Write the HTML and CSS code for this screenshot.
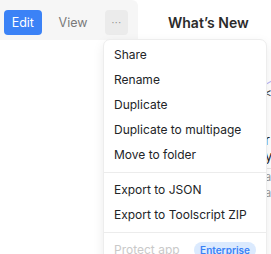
FILE: index.html
```html
<!DOCTYPE html>
<html lang="en">
<head>
  <meta charset="UTF-8">
  <title>App menu</title>
  <link rel="stylesheet" href="styles.css">
</head>
<body>
  <div class="page">
    <div class="topbar">
      <div class="mode-switch">
        <button class="mode-btn active">Edit</button>
        <button class="mode-btn">View</button>
        <button class="more-btn">&middot;&middot;&middot;</button>
      </div>
      <h2 class="whats-new">What’s New</h2>
    </div>

    <div class="behind">
      <div class="behind-line"></div>
      <div class="behind-chevron">&lt;</div>
      <div class="behind-big">r</div>
      <div class="behind-big">y</div>
      <div class="behind-rule"></div>
      <div class="behind-small">a</div>
      <div class="behind-small">a</div>
    </div>

    <div class="menu">
      <div class="menu-group">
        <div class="menu-item">Share</div>
        <div class="menu-item">Rename</div>
        <div class="menu-item">Duplicate</div>
        <div class="menu-item">Duplicate to multipage</div>
        <div class="menu-item">Move to folder</div>
      </div>
      <div class="menu-group">
        <div class="menu-item">Export to JSON</div>
        <div class="menu-item">Export to Toolscript ZIP</div>
      </div>
      <div class="menu-group">
        <div class="menu-item disabled">
          <span>Protect app</span>
          <span class="badge">Enterprise</span>
        </div>
      </div>
    </div>
  </div>
</body>
</html>
```

FILE: styles.css
```css
:root {
  --blue: #3b82f6;
  --text: #222427;
  --muted: #7a7a7a;
  --line: #ececec;
}

body {
  margin: 0;
  font-family: 'Inter', sans-serif;
  color: var(--text);
  background: white;
}

.page {
  position: relative;
  width: 271px;
  height: 254px;
  overflow: hidden;
}

.topbar {
  display: flex;
  align-items: flex-start;
}

.mode-switch {
  display: flex;
  align-items: center;
  background: #f6f6f6;
  padding: 10px 10px 5px 4px;
  width: 124px;
  height: 25px;
  border-top-right-radius: 6px;
}

.mode-btn {
  font-family: 'Inter', sans-serif;
  font-size: 12.5px;
  border: none;
  background: none;
  color: var(--muted);
  height: 25px;
  padding: 0;
  border-radius: 4px;
  cursor: pointer;
}

.mode-btn.active {
  background: var(--blue);
  color: white;
  width: 40px;
  margin-right: 17px;
}

.more-btn {
  margin-left: 17px;
  width: 25px;
  height: 25px;
  border: none;
  border-radius: 4px;
  background: #ebebeb;
  color: #8a8a8a;
  font-size: 10px;
  padding: 0;
}

.whats-new {
  margin: 14px 0 0 30px;
  font-size: 14px;
  font-weight: 600;
  color: #2b2b2b;
}

/* contents sitting underneath the menu */
.behind {
  position: absolute;
  left: 262px;
  top: 78px;
  width: 20px;
}

.behind-line {
  height: 1px;
  width: 10px;
  background: #b8b4f4;
  transform: rotate(-30deg);
  margin: 4px 0 0 2px;
}

.behind-chevron {
  font-size: 12px;
  line-height: 14px;
  color: #444;
  margin: 3px 0 32px 2px;
}

.behind-big {
  font-size: 13px;
  line-height: 16px;
  color: #222;
  margin-left: 3px;
}

.behind-rule {
  height: 1px;
  background: #e6e6e6;
  margin: 4px -10px 0;
}

.behind-small {
  font-size: 11px;
  line-height: 16px;
  color: #999;
  margin-left: 3px;
}

.menu {
  position: absolute;
  left: 103px;
  top: 39px;
  width: 162px;
  background: white;
  border: 1px solid #ededed;
  border-radius: 7px;
  box-shadow: 0 4px 12px rgba(0,0,0,0.08);
  padding-top: 2px;
}

.menu-group {
  padding: 0 0 5px;
}

.menu-group + .menu-group {
  border-top: 1px solid var(--line);
  padding-top: 4px;
}

.menu-item {
  display: flex;
  align-items: center;
  justify-content: space-between;
  height: 25px;
  padding: 0 10px;
  font-size: 12px;
  color: var(--text);
}

.menu-item.disabled {
  color: #c9c9c9;
}

.badge {
  background: #dbeafe;
  color: var(--blue);
  font-size: 10px;
  font-weight: 600;
  padding: 2px 6px;
  border-radius: 10px;
}
```
